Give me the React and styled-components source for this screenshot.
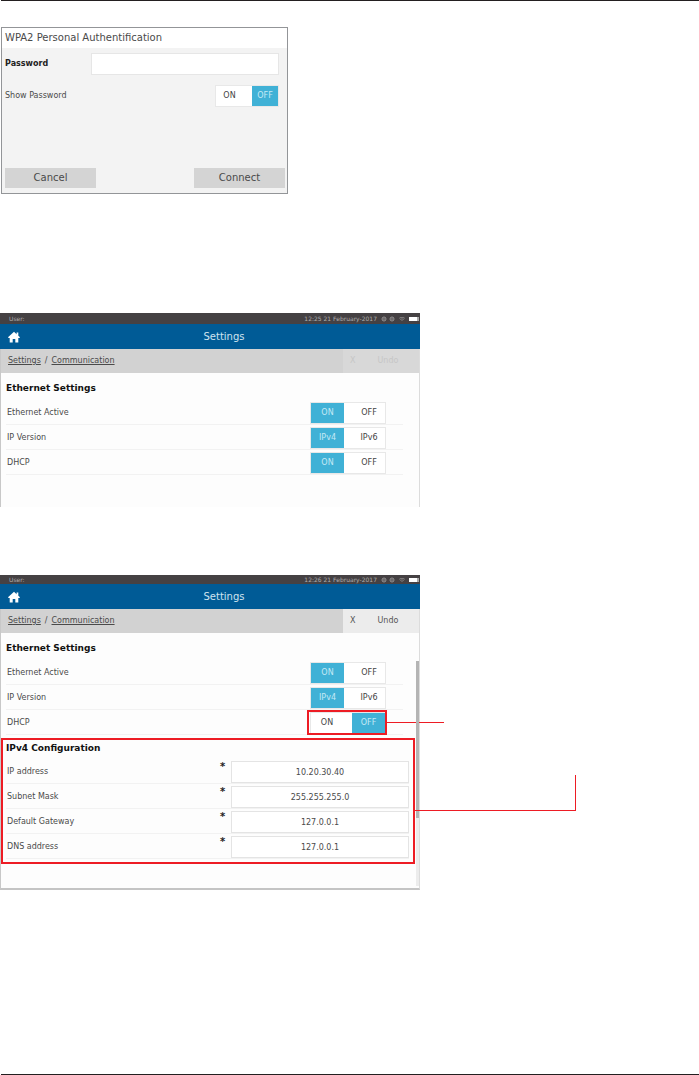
import React, { useState } from "react";
import styled, { createGlobalStyle } from "styled-components";
import { FaWifi } from "react-icons/fa";

const GlobalStyle = createGlobalStyle`
  * {
    box-sizing: border-box;
  }

  body {
    margin: 0;
    background: #fff;
    color: #4a4a4a;
    font-family: "DejaVu Sans", Verdana, sans-serif;
    font-size: 8px;
    line-height: 12px;
  }

  button,
  input {
    font: inherit;
    color: inherit;
    margin: 0;
    padding: 0;
  }
`;

// page
const Page = styled.main`
  display: flex;
  flex-direction: column;
  min-height: 100vh;
`;

const Rule = styled.hr`
  width: calc(100% - 1px);
  height: 1px;
  margin: 0 0 0 1px;
  border: 0;
  background: #231f20;
`;

const Figures = styled.div`
  display: flex;
  flex: 1;
  flex-direction: column;
  align-items: flex-start;
  padding-top: 26px;
`;

// wifi password dialog
const Dialog = styled.form`
  display: flex;
  flex-direction: column;
  width: 100%;
  max-width: 287px;
  min-height: 167px;
  margin: 0 0 119px 1px;
  border: 1px solid #939598;
  background: #f3f3f3;
`;

const DialogTitle = styled.h2`
  margin: 0;
  padding: 4px 3px;
  background: #fff;
  font-size: 10px;
  font-weight: 400;
`;

const Field = styled.div`
  display: flex;
  align-items: center;
  justify-content: space-between;
  height: 32px;
  padding: 0 8px 0 3px;
`;

const PasswordLabel = styled.label`
  color: #222;
  font-weight: 700;
`;

const PasswordInput = styled.input`
  width: 188px;
  height: 22px;
  border: 1px solid #e6e6e6;
  background: #fff;
`;

const Actions = styled.div`
  display: flex;
  justify-content: space-between;
  margin-top: auto;
  padding: 0 2px 5px 3px;
`;

const ActionButton = styled.button`
  width: 91px;
  height: 20px;
  border: 0;
  background: #d4d4d4;
  font-size: 10px;
`;

// on/off switch
const ToggleGroup = styled.div`
  position: relative;
  display: flex;
  width: ${(p) => (p.$small ? "64px" : "76px")};
  height: 22px;
  border: 1px solid #e8e8e8;
  background: #fff;
`;

const ToggleButton = styled.button`
  flex: ${(p) => (p.$active ? "0 0 auto" : "1")};
  width: ${(p) => (p.$small ? "26px" : "33px")};
  border: 0;
  background: ${(p) => (p.$active ? "#40b1d6" : "#fff")};
  color: ${(p) => (p.$active ? "#c4e9f5" : "#444")};

  &[aria-pressed="false"]:first-child {
    padding-right: 9px;
  }

  &[aria-pressed="false"]:not(:first-child) {
    padding-left: 9px;
  }
`;

// device screen
const Screen = styled.section`
  width: 100%;
  max-width: 420px;
  margin-bottom: 68px;
  border-left: 1px solid #c8c8c8;
  border-right: 1px solid #dcdcdc;
  border-bottom: ${(p) => (p.$framed ? "2px solid #c4c4c4" : "0")};
`;

const StatusBar = styled.div`
  display: flex;
  align-items: center;
  justify-content: space-between;
  height: ${(p) => (p.$slim ? "9px" : "11px")};
  margin: 0 -1px;
  padding: 0 1px 0 9px;
  background: #454143;
  color: #b0aeae;
  font-size: 6px;
  line-height: 8px;
`;

const StatusRight = styled.div`
  display: flex;
  align-items: center;
  gap: 4px;
`;

const TitleBar = styled.header`
  display: flex;
  align-items: center;
  gap: 8px;
  height: 25px;
  margin: 0 -1px;
  padding: 0 0 0 8px;
  background: #005b96;
`;

const HomeButton = styled.button`
  display: flex;
  border: 0;
  background: none;
  color: #fff;
`;

const Title = styled.h1`
  flex: 1;
  margin: 0;
  color: #cfe3f0;
  font-size: 10px;
  font-weight: 400;
  text-align: center;
`;

const CrumbBar = styled.div`
  display: flex;
  align-items: center;
  justify-content: space-between;
  height: 24px;
  padding-left: 7px;
  background: #d2d2d2;
`;

const Crumbs = styled.nav`
  display: flex;
  gap: 4px;
`;

const CrumbLink = styled.a`
  color: inherit;
`;

const UndoButton = styled.button`
  display: flex;
  align-items: center;
  gap: 22px;
  width: 76px;
  height: 24px;
  padding-left: 7px;
  border: 0;
  background: ${(p) => (p.disabled ? "#d8d8d8" : "#ececec")};
  color: ${(p) => (p.disabled ? "#c6c6c6" : "#555")};
`;

const Content = styled.div`
  position: relative;
  padding-bottom: ${(p) => p.$space};
  background: #fdfdfd;
`;

const Group = styled.div`
  position: relative;
  padding: 0 10px 0 5px;
`;

const GroupTitle = styled.h2`
  display: flex;
  align-items: center;
  height: ${(p) => (p.$compact ? "24px" : "27px")};
  margin: 0;
  padding-top: 2px;
  color: #111;
  font-size: 9px;
  font-weight: 700;
`;

const Row = styled.div`
  display: flex;
  align-items: center;
  height: 25px;
  margin-right: ${(p) => (p.$wide ? "0" : "6px")};
  padding: 2px ${(p) => (p.$wide ? "0" : "17px")} 0 1px;
  border-bottom: 1px solid #f2f2f2;
`;

const RowLabel = styled.label`
  flex: 1;
`;

const Required = styled.span`
  align-self: flex-start;
  width: 11px;
  color: #222;
  font-size: 10px;
  font-weight: 700;
`;

const AddressInput = styled.input`
  width: 178px;
  height: 22px;
  border: 1px solid #e4e4e4;
  background: #fff;
  text-align: center;
`;

const ScrollBar = styled.div`
  position: absolute;
  top: 28px;
  right: 0;
  bottom: 2px;
  width: 3px;
  background: #ececec;
`;

const ScrollThumb = styled.div`
  height: 157px;
  background: #b4b4b4;
`;

// red callouts drawn over the screen
const ToggleCallout = styled.div`
  position: absolute;
  inset: -3px -2px -2px -4px;
  border: 2px solid #ed1c24;
  pointer-events: none;

  &::after {
    content: "";
    position: absolute;
    top: 10px;
    left: 100%;
    width: 59px;
    height: 1px;
    background: #ed1c24;
  }
`;

const GroupCallout = styled.div`
  position: absolute;
  z-index: 1;
  inset: 3px 4px -5px 0;
  border: 2px solid #ed1c24;
  pointer-events: none;

  &::before,
  &::after {
    content: "";
    position: absolute;
    background: #ed1c24;
  }

  &::before {
    top: 70px;
    left: 100%;
    width: 163px;
    height: 1px;
  }

  &::after {
    top: 35px;
    left: calc(100% + 162px);
    width: 1px;
    height: 36px;
  }
`;

const addresses = [
  { id: "ip", label: "IP address", value: "10.20.30.40" },
  { id: "subnet", label: "Subnet Mask", value: "255.255.255.0" },
  { id: "gateway", label: "Default Gateway", value: "127.0.0.1" },
  { id: "dns", label: "DNS address", value: "127.0.0.1" },
];

const Toggle = ({ label, options = ["ON", "OFF"], initial, small, callout }) => {
  const [value, setValue] = useState(initial);

  return (
    <ToggleGroup role="group" aria-label={label} $small={small}>
      {options.map((option) => (
        <ToggleButton
          key={option}
          type="button"
          aria-pressed={option === value}
          $active={option === value}
          $small={small}
          onClick={() => setValue(option)}
        >
          {option}
        </ToggleButton>
      ))}
      {callout && <ToggleCallout />}
    </ToggleGroup>
  );
};

const HomeIcon = () => (
  <svg width="12" height="12" viewBox="0 0 12 12" fill="currentColor">
    <path d="M6 .8 8.6 3.2V1.6h1.7v3.1L12 6.3l-.6.7H10.3v4.5H7.3V8H4.7v3.5H1.7V7H.6L0 6.3z" />
  </svg>
);

const StatusIcons = () => (
  <svg width="14" height="6" viewBox="0 0 14 6" fill="none" stroke="#969494">
    <circle cx="3" cy="3" r="2" />
    <circle cx="11" cy="3" r="2" />
    <path d="M3 2v2M11 2v2" />
  </svg>
);

const Battery = () => (
  <svg width="10" height="6" viewBox="0 0 10 6">
    <rect x="0" y="1" width="8" height="4" fill="#fff" />
    <rect x="8" y="1" width="2" height="4" fill="#aaa" />
  </svg>
);

const SettingsScreen = ({ time, dhcp, edited, children }) => (
  <Screen $framed={edited}>
    <StatusBar $slim={edited}>
      <span>User:</span>
      <StatusRight>
        <span>{time} 21 February-2017</span>
        <StatusIcons />
        <FaWifi size={6} color="#8d8b8b" />
        <Battery />
      </StatusRight>
    </StatusBar>
    <TitleBar>
      <HomeButton type="button" aria-label="Home">
        <HomeIcon />
      </HomeButton>
      <Title>Settings</Title>
    </TitleBar>
    <CrumbBar>
      <Crumbs aria-label="Breadcrumb">
        <CrumbLink href="#settings">Settings</CrumbLink>
        <span>/</span>
        <CrumbLink href="#communication">Communication</CrumbLink>
      </Crumbs>
      <UndoButton type="button" disabled={!edited}>
        <span>X</span>
        <span>Undo</span>
      </UndoButton>
    </CrumbBar>
    <Content $space={edited ? "29px" : "32px"}>
      <Group>
        <GroupTitle>Ethernet Settings</GroupTitle>
        <Row>
          <RowLabel as="span">Ethernet Active</RowLabel>
          <Toggle label="Ethernet Active" initial="ON" />
        </Row>
        <Row>
          <RowLabel as="span">IP Version</RowLabel>
          <Toggle label="IP Version" options={["IPv4", "IPv6"]} initial="IPv4" />
        </Row>
        <Row>
          <RowLabel as="span">DHCP</RowLabel>
          <Toggle label="DHCP" initial={dhcp} callout={edited} />
        </Row>
      </Group>
      {children}
    </Content>
  </Screen>
);

const App = () => (
  <>
    <GlobalStyle />
    <Page>
      <Rule />
      <Figures>
        <Dialog onSubmit={(e) => e.preventDefault()}>
          <DialogTitle>WPA2 Personal Authentification</DialogTitle>
          <Field>
            <PasswordLabel htmlFor="password">Password</PasswordLabel>
            <PasswordInput id="password" type="password" />
          </Field>
          <Field>
            <span>Show Password</span>
            <Toggle label="Show Password" initial="OFF" small />
          </Field>
          <Actions>
            <ActionButton type="button">Cancel</ActionButton>
            <ActionButton type="submit">Connect</ActionButton>
          </Actions>
        </Dialog>

        <SettingsScreen time="12:25" dhcp="ON" />

        <SettingsScreen time="12:26" dhcp="OFF" edited>
          <Group>
            <GroupTitle $compact>IPv4 Configuration</GroupTitle>
            {addresses.map((item) => (
              <Row key={item.id} $wide>
                <RowLabel htmlFor={item.id}>{item.label}</RowLabel>
                <Required>*</Required>
                <AddressInput id={item.id} defaultValue={item.value} />
              </Row>
            ))}
            <GroupCallout />
          </Group>
          <ScrollBar>
            <ScrollThumb />
          </ScrollBar>
        </SettingsScreen>
      </Figures>
      <Rule />
    </Page>
  </>
);

export default App;
